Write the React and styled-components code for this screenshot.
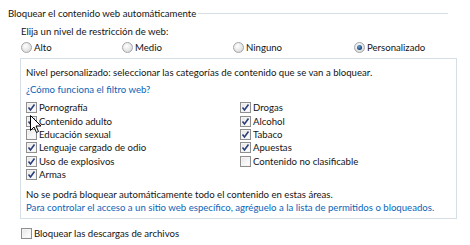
import React from 'react';
import styled, { createGlobalStyle } from 'styled-components';

const GlobalStyle = createGlobalStyle`
  body {
    margin: 0;
    background: #fff;
    font-family: Lato, "Noto Sans", sans-serif;
    font-size: 9.6px;
    color: #141414;
  }
`

const Page = styled.div`
  position: relative;
  width: 470px;
  height: 245px;
  padding: 7px 0 0 8px;
  box-sizing: border-box;
  line-height: 13px;
`

const GroupHeader = styled.div`
  display: flex;
  align-items: center;
  gap: 2px;
  margin-right: 22px;
`

const GroupLine = styled.div`
  flex: 1;
  height: 1px;
  background: #d5dfe5;
`

const Indent = styled.div`
  padding-left: 12px;
`

const Prompt = styled.div`
  margin-top: 5px;
  padding-left: 1px;
`

const RadioRow = styled.div`
  display: grid;
  grid-template-columns: 101px 111px 121px auto;
  margin-top: 3px;
  padding-left: 1px;
`

const Option = styled.label`
  display: flex;
  align-items: center;
  gap: 2px;
`

const RadioDot = styled.span`
  width: 11px;
  height: 11px;
  border-radius: 50%;
  box-sizing: border-box;
  border: 1px solid #a2a5a8;
  background: radial-gradient(circle at 40% 35%, #ffffff 0%, #e6e6e6 55%, #cfcfcf 100%);
  display: flex;
  align-items: center;
  justify-content: center;
  &::after {
    content: '';
    width: 5px;
    height: 5px;
    border-radius: 50%;
    background: radial-gradient(circle at 40% 35%, #6fa4d8 0%, #1d4f86 60%, #0c2c55 100%);
    display: ${p => (p.$on ? 'block' : 'none')};
  }
`

const Panel = styled.div`
  margin-top: 4px;
  width: 437px;
  box-sizing: border-box;
  border: 1px solid #d5dfe5;
  padding: 7px 5px 4px 5px;
`

const Link = styled.div`
  color: #0b64b8;
  margin-top: ${p => p.$gap || 0}px;
`

const Note = styled.div`
  margin-top: ${p => p.$gap || 0}px;
`

const CheckGrid = styled.div`
  display: grid;
  grid-template-columns: 214px auto;
  grid-auto-flow: column;
  grid-template-rows: repeat(6, 13.4px);
  margin-top: 5px;
`

const CheckItem = styled.label`
  display: flex;
  align-items: center;
  gap: 2px;
`

const Box = styled.span`
  width: 11px;
  height: 11px;
  box-sizing: border-box;
  border: 1px solid #8f8f8f;
  background: linear-gradient(135deg, #e4e4e4 0%, #f7f7f7 60%, #ffffff 100%);
  box-shadow: inset 0 0 0 1px #f4f4f4;
  display: flex;
  align-items: center;
  justify-content: center;
  flex: none;
`

const Footer = styled.div`
  margin-top: 8px;
  padding-left: 13px;
`

const Cursor = styled.svg`
  position: absolute;
  left: 30px;
  top: 115px;
`

const Check = ({ on }) => (
  <Box>
    {on && (
      <svg width="9" height="9" viewBox="0 0 9 9">
        <path d="M1.5 4.5 L3.5 7 L7.5 1.5" fill="none" stroke="#2a3f7a" strokeWidth="1.6" />
      </svg>
    )}
  </Box>
)

const levels = [
  { label: 'Alto', on: false },
  { label: 'Medio', on: false },
  { label: 'Ninguno', on: false },
  { label: 'Personalizado', on: true },
]

const categories = [
  { label: 'Pornografía', on: true },
  { label: 'Contenido adulto', on: true },
  { label: 'Educación sexual', on: false },
  { label: 'Lenguaje cargado de odio', on: true },
  { label: 'Uso de explosivos', on: true },
  { label: 'Armas', on: true },
  { label: 'Drogas', on: true },
  { label: 'Alcohol', on: true },
  { label: 'Tabaco', on: true },
  { label: 'Apuestas', on: true },
  { label: 'Contenido no clasificable', on: false },
]

const App = () => {
  return (
    <Page>
      <GlobalStyle />
      <GroupHeader>
        <span>Bloquear el contenido web automáticamente</span>
        <GroupLine />
      </GroupHeader>
      <Indent>
        <Prompt>Elija un nivel de restricción de web:</Prompt>
        <RadioRow>
          {levels.map((level, key) =>
            <Option key={key}>
              <RadioDot $on={level.on} />
              {level.label}
            </Option>
          )}
        </RadioRow>
        <Panel>
          <div>Nivel personalizado: seleccionar las categorías de contenido que se van a bloquear.</div>
          <Link $gap={4}>¿Cómo funciona el filtro web?</Link>
          <CheckGrid>
            {categories.map((item, key) =>
              <CheckItem key={key}>
                <Check on={item.on} />
                {item.label}
              </CheckItem>
            )}
          </CheckGrid>
          <Note $gap={7}>No se podrá bloquear automáticamente todo el contenido en estas áreas.</Note>
          <Link>Para controlar el acceso a un sitio web específico, agréguelo a la lista de permitidos o bloqueados.</Link>
        </Panel>
      </Indent>
      <Footer>
        <CheckItem>
          <Check on={false} />
          Bloquear las descargas de archivos
        </CheckItem>
      </Footer>
      <Cursor width="12" height="19" viewBox="0 0 12 19">
        <path d="M0.5 0.5 L0.5 15.5 L4 12 L6.5 17.5 L8.5 16.5 L6 11 L11 11 Z" fill="#fff" stroke="#000" strokeWidth="1" />
      </Cursor>
    </Page>
  )
}

export default App;
